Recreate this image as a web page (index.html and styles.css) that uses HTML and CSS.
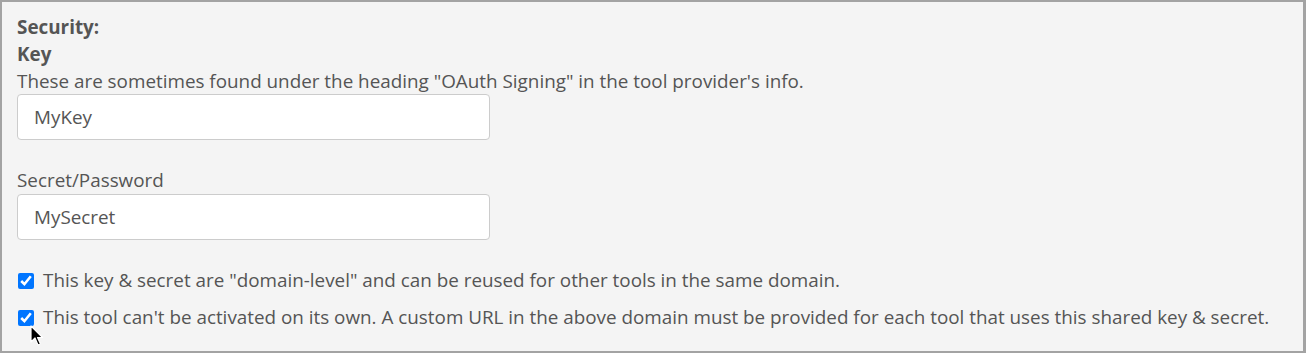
FILE: index.html
```html
<!DOCTYPE html>
<html>
<head>
<meta charset="utf-8">
<link rel="stylesheet" href="styles.css">
</head>
<body>
<div class="panel">
  <div class="heading">Security:</div>
  <div class="heading">Key</div>
  <div class="help">These are sometimes found under the heading "OAuth Signing" in the tool provider's info.</div>
  <div class="field"><input class="text-input" type="text" value="MyKey"></div>
  <label class="label">Secret/Password</label>
  <div class="field"><input class="text-input" type="text" value="MySecret"></div>
  <div class="checks">
    <label class="check"><input type="checkbox" checked><span>This key &amp; secret are "domain-level" and can be reused for other tools in the same domain.</span></label>
    <label class="check cursor-host"><input type="checkbox" checked><span>This tool can't be activated on its own. A custom URL in the above domain must be provided for each tool that uses this shared key &amp; secret.</span>
      <svg class="cursor" width="14" height="22" viewBox="0 0 14 22"><path d="M1 1 L1 17 L5 13 L8 20 L10.5 19 L7.5 12.5 L12.5 12.5 Z" fill="#000" stroke="#fff" stroke-width="1.2" stroke-linejoin="round"/></svg>
    </label>
  </div>
</div>
</body>
</html>
```

FILE: styles.css
```css
* { box-sizing: border-box; }
html, body { margin: 0; padding: 0; }
body {
  font-family: "Open Sans", "Liberation Sans", sans-serif;
  font-size: 18.85px;
  color: #555555;
  background: #ffffff;
}
.panel {
  width: 1306px;
  height: 353px;
  background: #f4f4f4;
  border: 2px solid #a3a3a3;
  border-right-width: 3px;
  padding: 12px 15px 0 15px;
  line-height: 27px;
}
.heading {
  font-weight: 700;
  color: #555555;
}
.help { margin-bottom: -1px; }
.field { margin-bottom: 27px; }
.text-input {
  display: block;
  width: 473px;
  height: 46px;
  border: 1px solid #cccccc;
  border-radius: 4px;
  background: #ffffff;
  padding: 0 16px;
  font-family: inherit;
  font-size: 18.85px;
  color: #555555;
  outline: none;
}
.label { display: block; }
.checks {
  margin-top: 26px;
  display: flex;
  flex-direction: column;
  gap: 10px;
}
.check {
  display: flex;
  align-items: center;
  gap: 9px;
  position: relative;
}
.check input {
  margin: 0 0 0 1px;
  width: 16px;
  height: 16px;
  accent-color: #0075ff;
}
.cursor {
  position: absolute;
  left: 13px;
  top: 21px;
}
```
